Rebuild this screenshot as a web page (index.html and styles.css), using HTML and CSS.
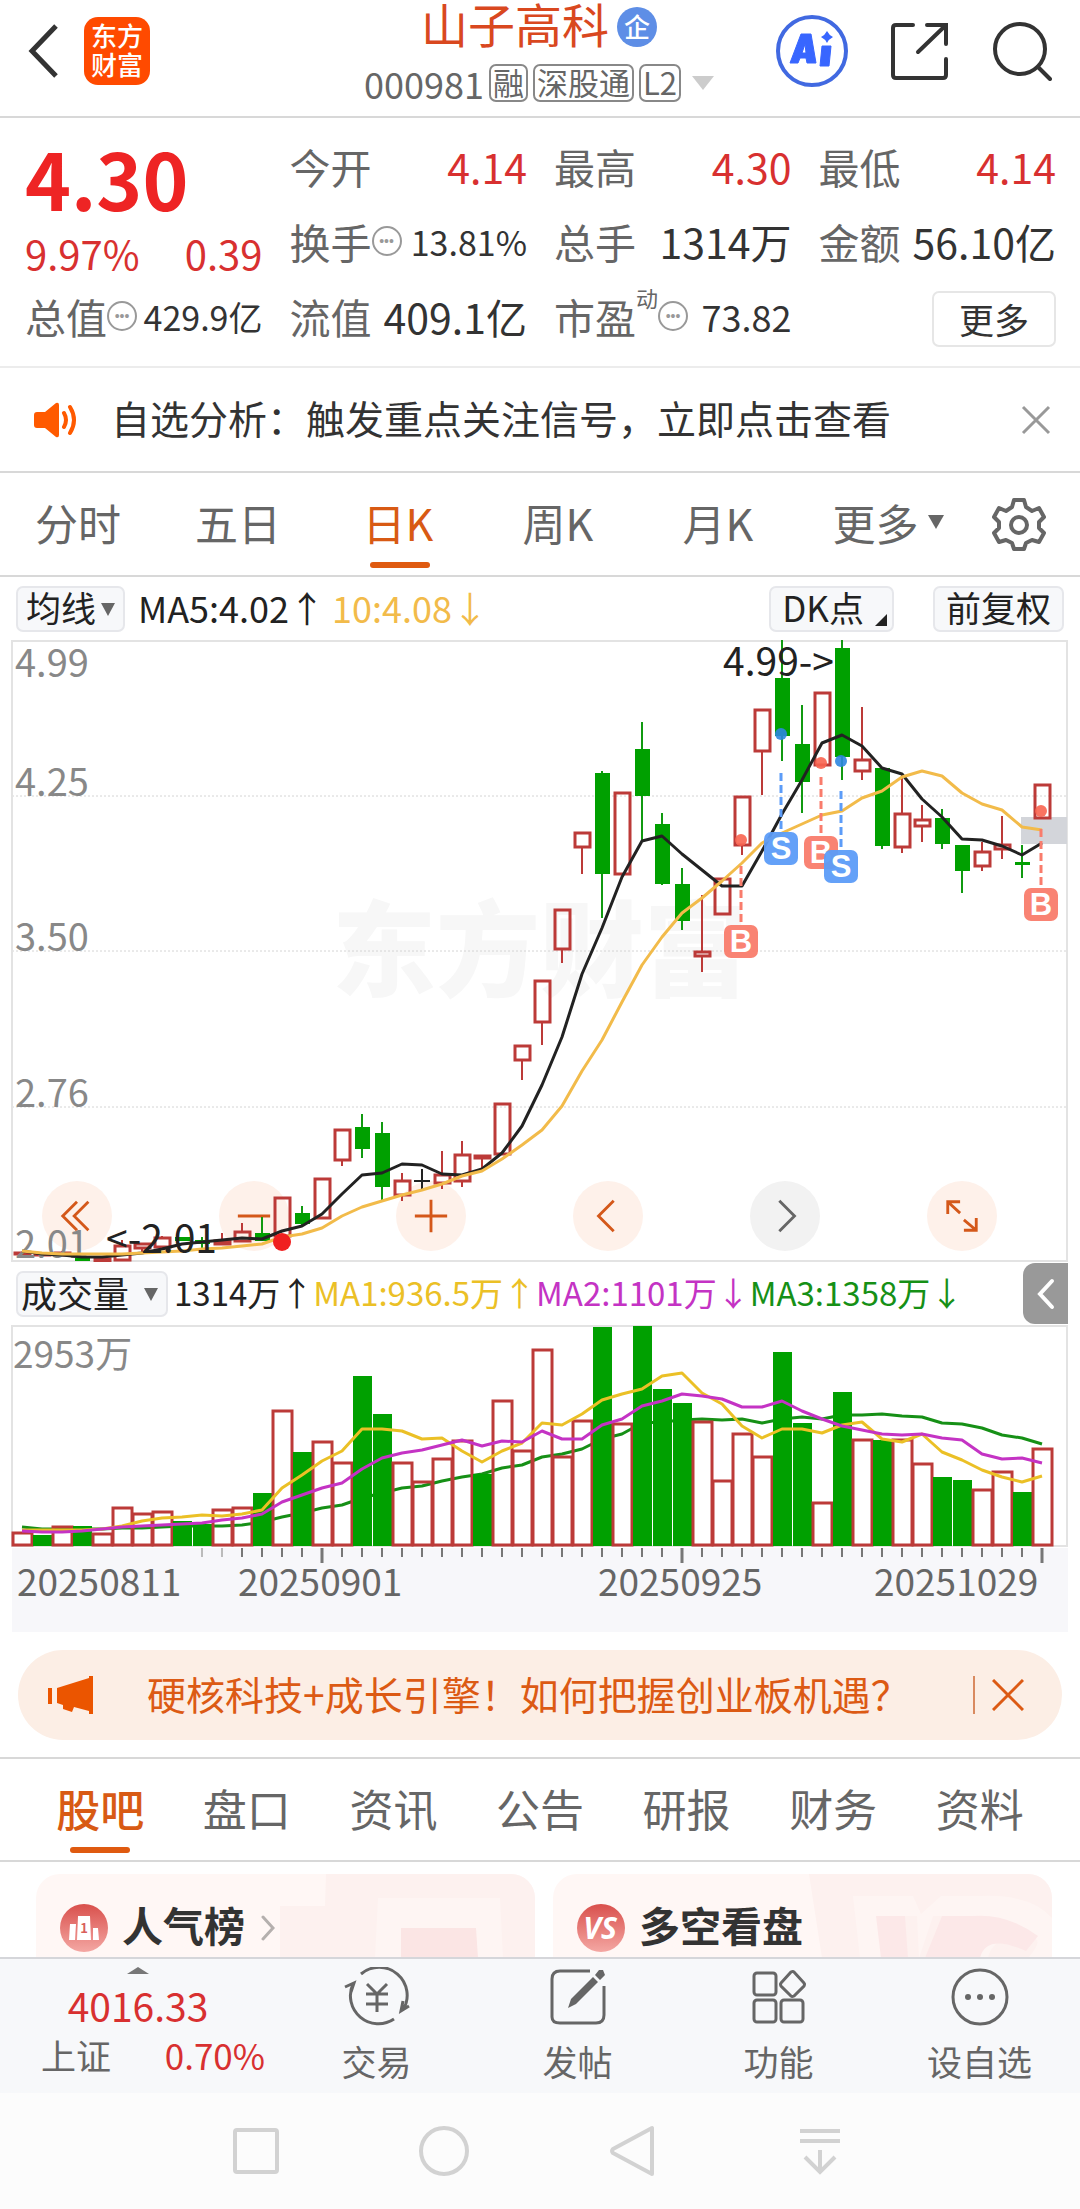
FILE: index.html
```html
<!DOCTYPE html>
<html lang="zh-CN">
<head>
<meta charset="utf-8">
<meta name="viewport" content="width=device-width, initial-scale=1">
<title>山子高科 000981</title>
<link rel="stylesheet" href="styles.css">
</head>
<body>
<div class="app">

<header class="top">
  <div class="top-left">
    <button class="icon-btn" aria-label="返回"><svg width="36" height="60" viewBox="0 0 36 60"><path d="M30 5 6 30l24 25" fill="none" stroke="#333" stroke-width="5"/></svg></button>
    <a href="#" class="logo">东方<br>财富</a>
  </div>
  <div class="top-title">
    <h1>山子高科<span class="qi">企</span></h1>
    <p class="code">000981<span class="tag">融</span><span class="tag">深股通</span><span class="tag">L2</span><i class="tri tri-light"></i></p>
  </div>
  <div class="top-right">
    <button class="icon-btn" aria-label="AI"><svg width="72" height="72" viewBox="0 0 72 72">
      <circle cx="36" cy="36" r="34" fill="none" stroke="#4169e1" stroke-width="4"/>
      <path d="M25 19h10l5 29h-9l-1-5h-6l-2 5h-8zM29 29l-3 9h4zM46 31h9l-2 20h-9z" fill="#3866ff" fill-rule="evenodd" stroke="#3866ff" stroke-width="1" stroke-linejoin="round"/>
      <path d="M51 16q2 4 6 6-4 2-6 6-2-4-6-6 4-2 6-6z" fill="#3866ff"/>
    </svg></button>
    <button class="icon-btn" aria-label="分享"><svg width="60" height="60" viewBox="0 0 60 60"><path d="M23 4H6q-3 0-3 3v47q0 3 3 3h47q3 0 3-3V38M37 4h19v19M55 5 28 31" fill="none" stroke="#333" stroke-width="4" stroke-linecap="round"/></svg></button>
    <button class="icon-btn" aria-label="搜索"><svg width="60" height="60" viewBox="0 0 60 60"><circle cx="28" cy="28" r="25" fill="none" stroke="#333" stroke-width="4"/><path d="m46 46 12 12" stroke="#333" stroke-width="4" stroke-linecap="round"/></svg></button>
  </div>
</header>

<section class="quote">
  <div class="price">
    <strong>4.30</strong>
    <div class="price-diff"><span>9.97%</span><span>0.39</span></div>
  </div>
  <dl><dt>今开</dt><dd class="up">4.14</dd></dl>
  <dl><dt>最高</dt><dd class="up">4.30</dd></dl>
  <dl><dt>最低</dt><dd class="up">4.14</dd></dl>
  <dl><dt>换手<i class="dots">•••</i></dt><dd class="small">13.81%</dd></dl>
  <dl><dt>总手</dt><dd>1314万</dd></dl>
  <dl><dt>金额</dt><dd>56.10亿</dd></dl>
  <dl><dt>总值<i class="dots">•••</i></dt><dd class="small">429.9亿</dd></dl>
  <dl><dt>流值</dt><dd>409.1亿</dd></dl>
  <dl><dt>市盈<sup>动</sup><i class="dots">•••</i></dt><dd class="mid">73.82</dd></dl>
  <button class="more">更多</button>
</section>

<section class="notice">
  <svg width="46" height="36" viewBox="0 0 46 36"><path d="M3 10h8L22 1q3-1 3 2v30q0 3-3 2L11 26H3q-3 0-3-3V13q0-3 3-3z" fill="#ff5a00"/><path d="M30 11q4 7 0 14M36 5q8 13 0 26" fill="none" stroke="#ff5a00" stroke-width="4" stroke-linecap="round"/></svg>
  <a href="#">自选分析：触发重点关注信号，立即点击查看</a>
  <button class="icon-btn" aria-label="关闭"><svg width="30" height="30" viewBox="0 0 30 30"><path d="m2 2 26 26M28 2 2 28" stroke="#999" stroke-width="3"/></svg></button>
</section>

<nav class="periods">
  <button>分时</button>
  <button>五日</button>
  <button class="active">日K</button>
  <button>周K</button>
  <button>月K</button>
  <button class="periods-more">更多<i class="tri"></i></button>
  <button class="periods-set" aria-label="设置"><svg width="54" height="54" viewBox="0 0 54 54" fill="none" stroke="#666" stroke-width="4" stroke-linejoin="round"><path d="M22 3h10l2 7 6 4 7-3 5 9-5 5v6l5 5-5 9-7-2-6 3-2 6H22l-2-6-6-3-7 2-5-9 5-5v-6l-5-5 5-9 7 3 6-4z"/><circle cx="27" cy="28" r="8"/></svg></button>
</nav>

<div class="ma">
  <label class="pick"><select aria-label="主图指标"><option>均线</option></select></label>
  <span class="ma5">MA5:4.02↑</span>
  <span class="ma10">10:4.08↓</span>
  <button class="chip dk">DK点<i></i></button>
  <button class="chip">前复权</button>
</div>

<section class="kline">
  <div class="tools">
    <button aria-label="最早"><svg viewBox="0 0 40 40"><path d="M20 5 5 20l15 15M32 5 17 20l15 15"/></svg></button>
    <button aria-label="缩小"><svg viewBox="0 0 40 40"><path d="M3 20h34"/></svg></button>
    <button aria-label="放大"><svg viewBox="0 0 40 40"><path d="M3 20h34M20 3v34"/></svg></button>
    <button aria-label="左移"><svg viewBox="0 0 40 40"><path d="M26 4 10 20l16 16"/></svg></button>
    <button aria-label="右移" class="off"><svg viewBox="0 0 40 40"><path d="m14 4 16 16-16 16"/></svg></button>
    <button aria-label="全屏"><svg viewBox="0 0 40 40"><path d="M5 18V5h13M5 5l13 12M35 22v13H22M35 35 22 24"/></svg></button>
  </div>
  <svg class="plot" viewBox="0 0 1080 622">
    <text x="540" y="349" class="watermark">东方财富</text>
    <path d="M12 156h1055M12 311h1055M12 467h1055" class="grid"/>
    <rect x="12" y="1" width="1055" height="620" class="frame"/>
    <rect x="1021" y="177" width="46" height="27" fill="#d3d5da"/>
    <g id="candles"></g>
    <g class="axis-text">
      <text x="15" y="37">4.99</text>
      <text x="15" y="156">4.25</text>
      <text x="15" y="311">3.50</text>
      <text x="15" y="467">2.76</text>
      <text x="15" y="618">2.01</text>
    </g>
    <g id="averages"></g>
    <g id="marks"></g>
    <g class="peak-text">
      <text x="106" y="613">&lt;-2.01</text>
      <text x="723" y="36">4.99-&gt;</text>
    </g>
  </svg>
</section>

<div class="vol-head">
  <label class="pick pick-wide"><select aria-label="副图指标"><option>成交量</option></select></label>
  <span class="v0">1314万↑</span>
  <span class="v1">MA1:936.5万↑</span>
  <span class="v2">MA2:1101万↓</span>
  <span class="v3">MA3:1358万↓</span>
  <button class="fold" aria-label="展开"><svg width="20" height="32" viewBox="0 0 20 32"><path d="M16 3 4 16l12 13" fill="none" stroke="#fff" stroke-width="4" stroke-linecap="round"/></svg></button>
</div>

<section class="volume">
  <svg class="plot" viewBox="0 0 1080 307">
    <rect x="12" y="1" width="1055" height="220" class="frame"/>
    <rect x="12" y="223" width="1056" height="84" fill="#f7f7fa"/>
    <g id="bars"></g>
    <text x="13" y="43" class="vol-text">2953万</text>
    <g id="ticks"></g>
    <g class="date-text">
      <text x="17" y="271">20250811</text>
      <text x="238" y="271">20250901</text>
      <text x="598" y="271">20250925</text>
      <text x="874" y="271">20251029</text>
    </g>
  </svg>
</section>

<aside class="banner">
  <svg width="46" height="40" viewBox="0 0 46 40" fill="#eb5500"><path d="M0 13h4v16H0zM9 13 41 3V1h4v38h-4v-3l-15-4-2 5-9-3v-4l-6-2z"/></svg>
  <a href="#">硬核科技+成长引擎！如何把握创业板机遇？</a>
  <button class="icon-btn" aria-label="关闭"><svg width="32" height="32" viewBox="0 0 32 32"><path d="m1 1 30 30M31 1 1 31" stroke="#dc5a14" stroke-width="3"/></svg></button>
</aside>

<nav class="sections">
  <button class="active">股吧</button>
  <button>盘口</button>
  <button>资讯</button>
  <button>公告</button>
  <button>研报</button>
  <button>财务</button>
  <button>资料</button>
</nav>

<main class="feed">
  <a href="#" class="card">
    <svg class="card-bg" viewBox="0 0 260 84" preserveAspectRatio="xMaxYMin slice"><path d="M51 0h209v84H5V32h45z" fill="#fdf1ef"/><path d="M103 24h122l3 60H100z" fill="#fef5f3"/><path d="M126 54h75l2 30h-77z" fill="#fbe5e4"/></svg>
    <svg class="card-icon" width="48" height="48" viewBox="0 0 48 48"><defs><linearGradient id="red" x2="0" y2="1"><stop stop-color="#d9504c"/><stop offset="1" stop-color="#f4a7a3"/></linearGradient></defs><circle cx="24" cy="24" r="24" fill="url(#red)"/><path d="M10 20h6l-1 16H9zM18 12h12l1 24H17zM33 24h5l1 12h-6z" fill="#fff"/><text x="24" y="29" class="podium">1</text></svg>
    <b>人气榜</b>
    <svg width="14" height="26" viewBox="0 0 14 26"><path d="m2 2 10 11L2 24" fill="none" stroke="#b5b0ae" stroke-width="3" stroke-linecap="round"/></svg>
  </a>
  <a href="#" class="card">
    <svg class="card-bg" viewBox="0 0 260 84" preserveAspectRatio="xMaxYMin slice"><path d="M17 0h243v84H30z" fill="#fdf1ef"/><path d="M61 22h60l8 18 20-18h40q50-2 71 22v40h-24q16-18 5-20-40-5-45 20h-50l15-42h-20l-14 42-2-42H85l5 42H68z" fill="#fef5f3"/><path d="M84 42h29l3 42H89zM150 42h30q35-3 66 20l-12 15q-40-18-46 7h-55z" fill="#fce8e8"/></svg>
    <svg class="card-icon" width="48" height="48" viewBox="0 0 48 48"><circle cx="24" cy="24" r="24" fill="url(#red)"/><text x="23" y="35" class="vs">VS</text></svg>
    <b>多空看盘</b>
  </a>
</main>

<footer class="bottom">
  <a href="#" class="index">
    <i class="tri-up"></i>
    <span class="index-value">4016.33</span>
    <span class="index-row"><span>上证</span><em>0.70%</em></span>
  </a>
  <a href="#" class="act"><svg width="66" height="60" viewBox="0 0 66 60"><path d="M17 7a28 28 0 0 1 42 36M50 52A28 28 0 0 1 9 17M1 20l9-4-3 9M65 39l-8 5 2-10M23 17l10 10 10-10M22 27h22M22 37h22M33 27v18"/></svg>交易</a>
  <a href="#" class="act"><svg width="60" height="60" viewBox="0 0 60 60"><path d="M42 4H12q-8 0-8 8v38q0 6 8 6h36q8 0 8-8V19"/><path d="m51 3 4 0 2 5-5 5-5-5zM45 10l5 5-22 22-8 4 3-9z" fill="#666" stroke="none"/></svg>发帖</a>
  <a href="#" class="act"><svg width="60" height="60" viewBox="0 0 60 60"><rect x="5" y="6" width="22" height="22" rx="3"/><rect x="5" y="33" width="22" height="22" rx="3"/><rect x="32" y="33" width="22" height="22" rx="3"/><path d="M42 5q2-1 3 0l10 11q1 1 0 3L45 29q-2 1-3 0L32 19q-1-2 0-3z"/></svg>功能</a>
  <a href="#" class="act"><svg width="60" height="60" viewBox="0 0 60 60"><circle cx="30" cy="30" r="27"/><g fill="#666" stroke="none"><circle cx="18" cy="30" r="3"/><circle cx="30" cy="30" r="3"/><circle cx="42" cy="30" r="3"/></g></svg>设自选</a>
</footer>

<div class="sysnav">
  <button aria-label="最近任务"><svg viewBox="0 0 54 54"><rect x="6" y="6" width="42" height="42" rx="2"/></svg></button>
  <button aria-label="主页"><svg viewBox="0 0 54 54"><circle cx="27" cy="27" r="23"/></svg></button>
  <button aria-label="返回"><svg viewBox="0 0 54 54"><path d="M47 4v46L8 29q-2-2 0-4z" stroke-linejoin="round"/></svg></button>
  <button aria-label="收起"><svg viewBox="0 0 54 54"><path d="M7 7h40M7 17h40M27 26v22M12 33l15 15 15-15"/></svg></button>
</div>

</div>
<script src="chart.js"></script>
</body>
</html>
```

FILE: styles.css
```css
* {box-sizing: border-box;}
body {margin: 0;background: #fff;color: #333;font-family: "Noto Sans CJK SC",sans-serif;}
h1,p,dl,dd {margin: 0;font-weight: 400;}
i,em {font-style: normal;}
a {color: inherit;text-decoration: none;}
button,select {padding: 0;border: 0;background: none;color: inherit;font: inherit;}
svg {display: block;}
.app {display: flex;flex-direction: column;height: 100vh;min-height: 2209px;}
.app > * {flex: none;}
.icon-btn {display: flex;}
.tri {display: inline-block;border: 8px solid transparent;border-top: 14px solid #666;border-bottom: 0;}
.tri-light {border-width: 14px 11px 0;border-top-color: #ccc;}

/* header */
.top {display: grid;grid-template-columns: 1fr auto 1fr;height: 118px;border-bottom: 2px solid #d8d8d8;padding: 0 28px 0 26px;}
.top-left,.top-right {display: flex;align-items: center;height: 102px;}
.top-left {gap: 22px;}
.top-right {justify-content: flex-end;gap: 42px;}
.logo {width: 66px;height: 68px;padding-top: 3px;border-radius: 14px;background: #ff4a00;color: #fff;font-size: 26px;font-weight: 500;line-height: 29px;text-align: center;}
.top-title {text-align: center;}
.top h1 {display: flex;justify-content: center;align-items: flex-end;gap: 8px;height: 47px;color: #d9481f;font-size: 47px;line-height: 48px;}
.qi {width: 40px;height: 40px;border-radius: 50%;background: #5e8ee6;color: #fff;font-size: 26px;font-weight: 500;line-height: 37px;}
.code {display: flex;justify-content: center;align-items: center;gap: 5px;height: 70px;padding-top: 2px;color: #666;font-size: 36px;}
.tag {height: 38px;padding: 0 2px;border: 2px solid #888;border-radius: 7px;font-size: 31px;line-height: 32px;}
.code .tri {margin-left: 6px;}

/* quote */
.quote {display: grid;grid-template-columns: repeat(4,1fr);grid-auto-rows: 75px;column-gap: 27px;padding: 13px 24px 11px 25px;height: 250px;border-bottom: 2px solid #ececec;}
.price {grid-row: span 2;color: #ee2424;}
.price strong {display: block;height: 93px;font-size: 78px;font-weight: 700;line-height: 92px;}
.price-diff {display: flex;justify-content: space-between;color: #d83030;font-size: 40px;line-height: 58px;}
.quote dl {display: flex;align-items: center;justify-content: space-between;padding-bottom: 5px;white-space: nowrap;}
.quote dt {display: flex;align-items: center;color: #666;font-size: 41px;}
.quote dd {color: #333;font-size: 41px;}
.quote dd.mid {font-size: 36px;}
.quote dd.small {font-size: 34px;}
.quote dd.up {color: #d83030;}
.dots {width: 30px;height: 30px;border: 2px solid #999;border-radius: 50%;color: #999;font: 14px/26px "Liberation Sans",sans-serif;text-align: center;}
.quote sup {align-self: flex-start;font-size: 22px;line-height: 22px;}
.more {justify-self: end;align-self: center;width: 124px;height: 56px;border: 2px solid #e6e6e6;border-radius: 7px;font-size: 35px;line-height: 48px;}

/* notice */
.notice {display: flex;align-items: center;height: 105px;padding: 0 29px 0 34px;border-bottom: 2px solid #d8d8d8;font-size: 39px;}
.notice a,.banner a {flex: 1;padding-bottom: 5px;}
.notice a {margin-left: 31px;}

/* period tabs */
.periods {display: grid;grid-template-columns: repeat(6,4fr) 3fr;height: 104px;border-bottom: 2px solid #d8d8d8;color: #666;font-size: 43px;}
.periods button,.sections button {position: relative;display: flex;align-items: center;justify-content: center;padding-bottom: 4px;}
.periods button {padding-right: 4px;}
.periods .periods-more {gap: 9px;padding: 0 0 4px 16px;}
.periods .periods-set {padding: 0 2px 0 0;}
.active {color: #d85a14;}
.active::after {content: "";position: absolute;bottom: 7px;left: calc(50% - 30px);width: 60px;height: 6px;border-radius: 3px;background: #df5a10;}

/* indicator rows */
.ma {display: flex;align-items: center;height: 63px;padding: 0 16px;font-size: 36px;}
.ma span,.vol-head span {padding-bottom: 4px;}
.pick {position: relative;height: 46px;margin-right: 13px;border: 2px solid #e6e7eb;border-radius: 7px;background: #f7f8fa;}
.pick select {display: block;width: 105px;height: 42px;padding: 0 0 4px 8px;appearance: none;color: #222;font-size: 35px;line-height: 38px;}
.pick::after {content: "";position: absolute;right: 8px;top: 15px;border: 7px solid transparent;border-top: 13px solid #666;border-bottom: 0;pointer-events: none;}
.pick.pick-wide select {width: 148px;padding-left: 3px;font-size: 36px;}
.ma5 {color: #222;}
.ma10 {flex: 1;margin-left: 7px;color: #f2bb4a;}
.chip {height: 46px;padding: 0 11px 4px;border: 2px solid #e6e7eb;border-radius: 7px;background: #f7f8fa;color: #222;font-size: 35px;line-height: 38px;}
.dk {display: flex;align-items: flex-end;gap: 11px;margin-right: 39px;padding-right: 5px;}
.dk i {border-left: 12px solid transparent;border-bottom: 12px solid #222;}

/* charts */
.kline {position: relative;}
.plot {position: relative;width: 100%;height: auto;pointer-events: none;}
.tools {position: absolute;left: 0;right: 0;bottom: 11px;display: flex;justify-content: space-between;padding: 0 83px 0 42px;}
.tools button {display: flex;width: 70px;height: 70px;border-radius: 50%;background: #fef1ea;align-items: center;justify-content: center;}
.tools svg {width: 38px;height: 38px;fill: none;stroke: #d4581a;stroke-width: 3;}
.tools .off {background: #f2f2f2;}
.tools .off svg {stroke: #666;}
.watermark {fill: #f7f7f7;font-size: 104px;font-weight: 900;text-anchor: middle;}
.frame {fill: none;stroke: #e3e3e3;stroke-width: 2;}
.grid {stroke: #d4d4d4;stroke-width: 1;stroke-dasharray: 2 2;}
.axis-text {fill: #888;font-size: 38px;}
.vol-text {fill: #888;font-size: 37px;}
.peak-text {fill: #222;font-size: 39px;}
.date-text {fill: #666;font-size: 37px;}
.red {fill: none;stroke: #bc3a38;stroke-width: 3;}
.green {fill: #00a000;stroke: none;}
.wick-red {stroke: #bc3a38;stroke-width: 2;}
.wick-green {stroke: #109a10;stroke-width: 2;}
.wick-black {stroke: #222;stroke-width: 2;}
.line {fill: none;stroke-width: 3;stroke-linejoin: round;}
.mark {fill: #fff;font-family: "Liberation Sans",sans-serif;font-size: 31px;font-weight: 700;text-anchor: middle;}
.vol-head {display: flex;align-items: center;height: 63px;padding: 0 12px 0 16px;font-size: 33px;white-space: nowrap;}
.vol-head .pick {margin-right: 6px;}
.v0 {color: #222;}
.v1 {color: #ebc026;}
.v2 {color: #c433c4;}
.v3 {color: #169016;}
.fold {display: flex;align-items: center;justify-content: center;width: 45px;height: 61px;margin-left: auto;border-radius: 12px 0 0 12px;background: #999;}

/* banner */
.banner {display: flex;align-items: center;height: 90px;margin: 18px 18px 17px;padding: 0 38px 0 30px;border-radius: 45px;background: #fceee5;color: #dc5a14;font-size: 39px;white-space: nowrap;}
.banner a {margin-left: 53px;}
.banner button {padding: 3px 0 3px 17px;border-left: 2px solid #d98a60;}

/* section tabs */
.sections {display: grid;grid-template-columns: repeat(7,1fr);height: 105px;padding: 0 27px;border-top: 2px solid #d8d8d8;border-bottom: 2px solid #d8d8d8;color: #666;font-size: 44px;}
.sections .active {font-weight: 500;}

/* feed */
.app .feed {display: grid;grid-template-columns: 1fr 1fr;gap: 18px;flex: 1 1 0;min-height: 0;overflow: hidden;padding: 12px 28px 0 36px;}
.card {position: relative;display: flex;align-items: center;height: 108px;padding: 0 24px;border-radius: 24px 24px 0 0;overflow: hidden;background: #fff7f5;}
.card-bg {position: absolute;top: 0;right: 0;width: 260px;height: 84px;}
.card b {position: relative;margin: 0 16px 8px 14px;font-size: 41px;font-weight: 700;}
.card-icon {position: relative;}
.podium {fill: #d9605c;font-size: 13px;font-weight: 700;text-anchor: middle;}
.vs {fill: #fff;font: italic 700 30px "Open Sans",sans-serif;text-anchor: middle;}

/* bottom bar */
.bottom {display: flex;height: 136px;border-top: 2px solid #d5d6da;background: #f7f8fa;color: #666;font-size: 35px;}
.index {display: flex;flex-direction: column;align-items: center;width: 276px;padding-top: 8px;color: #d83030;}
.tri-up {border: 11px solid transparent;border-bottom: 7px solid #777;border-top: 0;}
.index-value {margin-top: 3px;font-size: 39px;line-height: 56px;}
.index-row {display: flex;justify-content: space-between;align-self: stretch;padding: 0 11px 0 41px;line-height: 44px;}
.index-row span {color: #666;}
.act {display: flex;flex: 1;flex-direction: column;align-items: center;gap: 10px;padding-top: 8px;line-height: 48px;}
.act svg {fill: none;stroke: #666;stroke-width: 3;}

/* system navigation */
.sysnav {display: flex;justify-content: center;gap: 134px;height: 116px;padding: 31px 4px 0 0;background: #fcfcfc;}
.sysnav svg {width: 54px;height: 54px;fill: none;stroke: #d2d2d2;stroke-width: 4;}
.sysnav button {height: 54px;}
```

FILE: chart.js
```javascript
// one trading day every 20 units, first one at x=22
function dayX(i){
  return 22 + i * 20;
}

// [type, body top, body bottom, wick top, wick bottom]
var candles = [
  ["r",612,614,612,614],["r",613,615,613,615],["r",612,615,611,615],["g",617,621,617,621],["r",618,621,618,621],
  ["r",605,620,600,620],["r",603,608,603,612],["r",597,607,596,607],["g",597,601,597,601],["g",600,604,597,608],
  ["r",600,604,593,604],["r",591,601,583,601],["g",593,601,577,601],["r",557,596,557,596],["g",573,584,566,586],
  ["r",538,578,538,578],["r",489,520,489,526],["g",487,509,474,518],["g",493,547,482,561],["r",540,555,533,561],
  ["b",541,541,529,549],["r",534,543,511,549],["r",514,541,501,547],["r",515,518,515,528],["r",463,514,463,514],
  ["r",405,420,405,440],["r",340,382,340,405],["r",269,309,269,323],["r",192,207,192,234],["g",133,234,131,278],
  ["r",152,234,152,234],["g",109,156,82,201],["g",184,244,173,245],["g",244,281,228,290],["r",311,316,255,332],
  ["r",238,274,238,274],["r",156,205,156,215],["r",69,111,69,155],["g",38,96,0,121],["g",104,142,65,173],
  ["r",52,125,52,125],["g",8,117,0,140],["r",119,131,67,140],["g",128,206,128,209],["r",173,207,135,213],
  ["r",179,186,165,202],["g",178,204,169,209],["g",205,231,205,253],["r",211,226,202,231],["r",204,209,176,219],
  ["g",222,225,205,238],["r",144,178,144,178]
];

var ma5 = [611,614,615,617,617,615,613,609,604,602,600,598,599,591,586,574,554,535,533,524,525,534,535,529,513,486,445,397,334,288,237,201,196,214,230,246,246,211,174,140,103,95,106,128,134,159,177,199,200,206,215,203];
var ma10 = [611,613,614,614,614,614,613,612,611,609,608,606,604,597,594,588,576,567,561,555,550,544,536,531,519,505,490,466,431,400,362,325,297,273,258,241,223,203,193,184,175,171,158,151,137,131,136,153,164,170,187,190];

// volume bar tops, the base line is at 220
var volumes = [207,210,201,201,208,182,188,186,196,199,184,182,168,85,127,116,137,51,89,137,156,133,115,149,75,125,24,131,95,2,98,1,64,78,96,155,108,131,27,98,177,67,114,115,114,138,152,155,164,146,167,123];
var volMa1 = [205,205,205,205,204,201,196,193,192,190,191,189,185,163,150,136,126,104,104,106,114,113,126,137,126,118,98,100,89,75,69,64,51,48,68,79,101,113,104,104,108,100,97,114,117,109,127,135,145,152,157,151];
var volMa2 = [206,207,207,206,204,202,201,200,199,198,195,193,189,177,170,163,158,144,133,128,125,120,115,121,116,117,106,114,114,100,94,81,76,69,71,74,82,82,76,86,94,101,105,109,110,109,113,115,129,134,133,138];
var volMa3 = [202,204,204,204,204,203,203,202,201,201,201,200,197,192,188,183,180,173,168,163,161,156,152,149,143,140,132,129,124,114,109,98,97,95,94,95,94,98,94,92,94,90,90,89,91,92,98,99,103,110,113,119];

// [day, type, dot y, dash top, badge top]
var marks = [
  [36,"B",200,226,285],
  [38,"S",94,133,192],
  [40,"B",123,137,196],
  [41,"S",121,151,210],
  [51,"B",171,189,248]
];

function polyline(values, color){
  var pts = [];
  for(var i=0; i<values.length; i++){
    pts.push(dayX(i) + "," + values[i]);
  }
  return '<polyline class="line" stroke="' + color + '" points="' + pts.join(" ") + '"/>';
}

function vline(x, y1, y2, cls){
  return '<line x1="' + x + '" x2="' + x + '" y1="' + y1 + '" y2="' + y2 + '" class="' + cls + '"/>';
}

function drawCandles(){
  var out = "";
  for(var i=0; i<candles.length; i++){
    var c = candles[i];
    var x = dayX(i);
    if(c[0]=="r"){
      out += vline(x, c[3], c[1], "wick-red") + vline(x, c[2], c[4], "wick-red");
      out += '<rect class="red" x="' + (x-7) + '" y="' + (c[1]+1) + '" width="15" height="' + Math.max(c[2]-c[1]-1,1) + '"/>';
    }else if(c[0]=="g"){
      out += vline(x, c[3], c[4], "wick-green");
      out += '<rect class="green" x="' + (x-7) + '" y="' + c[1] + '" width="15" height="' + (c[2]-c[1]) + '"/>';
    }else{
      out += vline(x, c[3], c[4], "wick-black");
      out += '<path class="wick-black" d="M' + (x-8) + ' ' + c[1] + 'h16"/>';
    }
  }
  document.getElementById("candles").innerHTML = out;
  document.getElementById("averages").innerHTML = polyline(ma5, "#222") + polyline(ma10, "#f2bb4a");
}

function drawMarks(){
  var out = '<circle cx="282" cy="602" r="9" fill="#f02020"/>';
  for(var i=0; i<marks.length; i++){
    var m = marks[i];
    var x = dayX(m[0]) - 1;
    var color = m[1]=="B" ? "#f97c6c" : "#5c9cf8";
    out += '<circle cx="' + x + '" cy="' + m[2] + '" r="6" fill="' + (m[1]=="B" ? "#f86450" : "#2e86e0") + '" opacity="0.9"/>';
    out += '<line x1="' + x + '" x2="' + x + '" y1="' + m[3] + '" y2="' + (m[4]-2) + '" stroke="' + color + '" stroke-width="3" stroke-dasharray="8 4"/>';
    out += '<rect x="' + (x-17) + '" y="' + m[4] + '" width="34" height="33" rx="7" fill="' + color + '" opacity="0.95"/>';
    out += '<text class="mark" x="' + x + '" y="' + (m[4]+27) + '">' + m[1] + '</text>';
  }
  document.getElementById("marks").innerHTML = out;
}

function drawVolume(){
  var out = polyline(volMa3, "#169016");
  for(var i=0; i<volumes.length; i++){
    var x = dayX(i);
    var y = volumes[i];
    if(candles[i][0]=="g" || i==1 || i==23){
      out += '<rect class="green" x="' + (x-9) + '" y="' + y + '" width="19" height="' + (221-y) + '"/>';
    }else{
      out += '<rect class="red" x="' + (x-9) + '" y="' + (y+1) + '" width="19" height="' + (219-y) + '"/>';
    }
  }
  out += polyline(volMa1, "#ebc026") + polyline(volMa2, "#c433c4");
  document.getElementById("bars").innerHTML = out;

  var ticks = "";
  for(var j=9; j<volumes.length; j++){
    var major = (j==15 || j==33 || j==51);
    ticks += '<line x1="' + dayX(j) + '" x2="' + dayX(j) + '" y1="223" y2="' + (major ? 238 : 232) + '" stroke="' + (j<11 ? "#bbb" : "#777") + '" stroke-width="' + (major ? 3 : 2) + '"/>';
  }
  document.getElementById("ticks").innerHTML = ticks;
}

drawCandles();
drawMarks();
drawVolume();
```
